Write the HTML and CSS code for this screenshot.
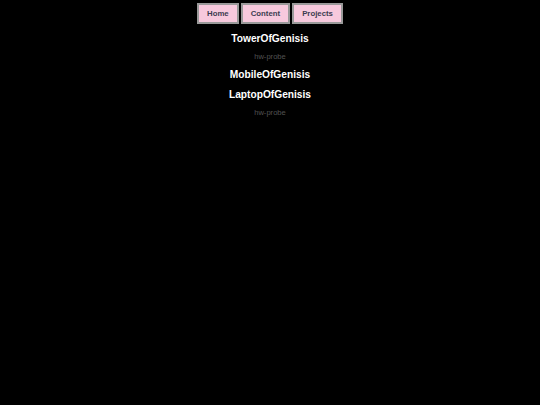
FILE: index.html
```html
<!DOCTYPE html>
<html>
<head>
<meta charset="utf-8">
<link rel="stylesheet" href="styles.css">
</head>
<body>
<nav class="nav">
  <a class="btn" href="#">Home</a>
  <a class="btn" href="#">Content</a>
  <a class="btn" href="#">Projects</a>
</nav>
<main class="main">
  <section class="device">
    <h2 class="title">TowerOfGenisis</h2>
    <p class="sub">hw-probe</p>
  </section>
  <section class="device">
    <h2 class="title">MobileOfGenisis</h2>
  </section>
  <section class="device">
    <h2 class="title">LaptopOfGenisis</h2>
    <p class="sub">hw-probe</p>
  </section>
</main>
</body>
</html>
```
FILE: styles.css
```css
html, body {
  margin: 0;
  padding: 0;
  background: #000;
  font-family: "Liberation Sans", Arial, sans-serif;
}
.nav {
  display: flex;
  justify-content: center;
  gap: 2px;
  padding-top: 3px;
}
.btn {
  display: block;
  background: #f7c9dd;
  border: 2px solid #9a9a9a;
  color: #3c3c50;
  font-size: 7.8px;
  font-weight: bold;
  text-decoration: none;
  padding: 3px 8px;
  line-height: 11px;
}
.main {
  display: flex;
  flex-direction: column;
  align-items: center;
  padding-top: 8px;
}
.device {
  display: flex;
  flex-direction: column;
  align-items: center;
}
.title {
  margin: 0;
  color: #fff;
  font-size: 10.2px;
  font-weight: bold;
  line-height: 14px;
  padding: 0 0 6px;
}
.sub {
  margin: 0;
  color: #525252;
  font-size: 7.6px;
  line-height: 10px;
  padding: 0 0 6px;
}
```
